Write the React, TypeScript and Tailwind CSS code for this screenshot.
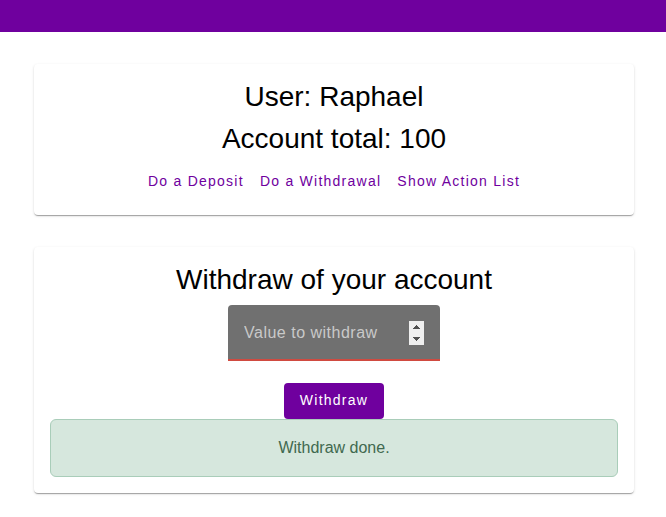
import { useState } from 'react';

const card =
  'flex flex-col items-center rounded bg-white px-4 text-center shadow-[0px_2px_1px_-1px_rgba(0,0,0,0.2),0px_1px_1px_0px_rgba(0,0,0,0.14),0px_1px_3px_0px_rgba(0,0,0,0.12)]';

const links = ['Do a Deposit', 'Do a Withdrawal', 'Show Action List'];

export default function App() {
  const [value, setValue] = useState('');

  const step = (amount: number) => setValue(String(Number(value) + amount));

  return (
    <div className="min-h-screen bg-white font-['Liberation_Sans',Arial,sans-serif] text-black">
      <header className="h-8 bg-[#6f009e]" />
      <main className="flex flex-col gap-8 py-8 pr-8 pl-[34px]">
        <section className={`${card} pt-3 pb-[14px]`}>
          <h1 className="text-[28px] leading-[42px]">User: Raphael</h1>
          <h1 className="text-[28px] leading-[42px]">Account total: 100</h1>
          <nav className="flex h-[41px] items-center gap-4 text-sm tracking-[1.25px] text-[#6f009e]">
            {links.map((link) => (
              <a key={link} href="#">
                {link}
              </a>
            ))}
          </nav>
        </section>

        <section className={`${card} pt-3 pb-4`}>
          <h2 className="text-[28px] leading-[42px]">Withdraw of your account</h2>
          <div className="mt-1 flex h-14 w-[212px] items-center rounded-t border-b-2 border-[#d04a40] bg-[#707070] px-4 pt-[2px]">
            <input
              type="number"
              aria-label="Value to withdraw"
              placeholder="Value to withdraw"
              value={value}
              onChange={(event) => setValue(event.target.value)}
              className="min-w-0 flex-1 bg-transparent text-base tracking-[0.5px] text-white outline-none [appearance:textfield] placeholder:text-[#c9c9c9]"
            />
            <div className="flex h-6 w-[15px] flex-col bg-[#efefef]">
              <button type="button" aria-label="Increase" onClick={() => step(1)} className="flex flex-1 items-center justify-center">
                <svg width="7" height="4" viewBox="0 0 7 4" fill="#505050" shapeRendering="crispEdges">
                  <path d="M3 0h1v1h1v1h1v1h1v1H0V3h1V2h1V1h1z" />
                </svg>
              </button>
              <button type="button" aria-label="Decrease" onClick={() => step(-1)} className="flex flex-1 items-center justify-center">
                <svg width="7" height="4" viewBox="0 0 7 4" fill="#505050" shapeRendering="crispEdges">
                  <path d="M0 0h7v1H6v1H5v1H4v1H3V3H2V2H1V1H0z" />
                </svg>
              </button>
            </div>
          </div>
          <button type="button" className="mt-[22px] h-9 rounded bg-[#6f009e] px-4 pb-[2px] text-sm font-medium tracking-[1.25px] text-white">
            Withdraw
          </button>
          <div role="alert" className="w-full rounded-md border border-[#a9cdb9] bg-[#d6e7dd] p-4 text-base text-[#41694f]">
            Withdraw done.
          </div>
        </section>
      </main>
    </div>
  );
}
